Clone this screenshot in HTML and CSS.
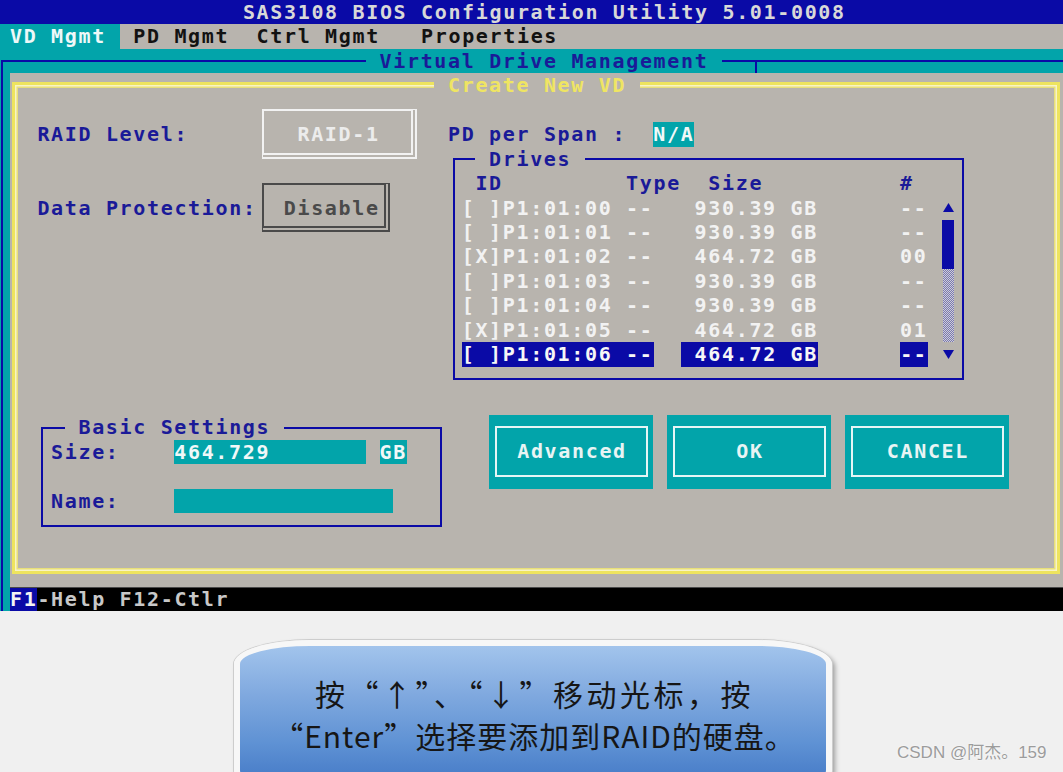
FILE: index.html
```html
<!DOCTYPE html>
<html lang="zh-CN">
<head>
<meta charset="utf-8">
<title>SAS3108 BIOS Configuration Utility</title>
<link rel="stylesheet" href="styles.css">
</head>
<body>
<div class="screen">
  <div class="bios">
    <div class="titlebar">SAS3108 BIOS Configuration Utility 5.01-0008</div>
    <div class="menubar"><span class="tab-active">VD Mgmt </span> PD Mgmt  Ctrl Mgmt   Properties</div>

    <div class="frame-bg"></div>
    <div class="frame-line"></div>
    <div class="frame-title">Virtual Drive Management</div>
    <div class="frame-tick"></div>

    <div class="panel"></div>
    <div class="panel-border"></div>
    <div class="panel-title">Create New VD</div>

    <div class="lbl lbl-raid">RAID Level:</div>
    <div class="box-raid"></div>
    <div class="val-raid">RAID-1</div>

    <div class="lbl lbl-dp">Data Protection:</div>
    <div class="box-dp"></div>
    <div class="val-dp">Disable</div>

    <div class="lbl lbl-span">PD per Span :</div>
    <div class="val-span">N/A</div>

    <div class="drives-box"></div>
    <div class="drives-title">Drives</div>
    <div class="drive-list"><div class="drive-head"> ID         Type  Size          #</div><div class="drive-row">[ ]P1:01:00 --   930.39 GB      --</div><div class="drive-row">[ ]P1:01:01 --   930.39 GB      --</div><div class="drive-row">[X]P1:01:02 --   464.72 GB      00</div><div class="drive-row">[ ]P1:01:03 --   930.39 GB      --</div><div class="drive-row">[ ]P1:01:04 --   930.39 GB      --</div><div class="drive-row">[X]P1:01:05 --   464.72 GB      01</div><div class="drive-row"><span class="sel">[ ]P1:01:06 --</span>  <span class="sel"> 464.72 GB</span>      <span class="sel">--</span></div></div>
    <div class="scrollbar"><div class="sb-arrow"><svg width="11" height="9" viewBox="0 0 11 9"><polygon points="5.5,0 11,9 0,9" fill="#0a0aa6"/></svg></div><div class="sb-thumb"></div><div class="sb-track"></div><div class="sb-arrow"><svg width="11" height="9" viewBox="0 0 11 9"><polygon points="0,0 11,0 5.5,9" fill="#0a0aa6"/></svg></div></div>

    <div class="basic-box"></div>
    <div class="basic-title">Basic Settings</div>
    <div class="lbl lbl-size">Size:</div>
    <div class="fld fld-size">464.729</div>
    <div class="fld fld-gb">GB</div>
    <div class="lbl lbl-name">Name:</div>
    <div class="fld fld-name"></div>

    <div class="btn btn-advanced"><div class="btn-inner">Advanced</div></div>
    <div class="btn btn-ok"><div class="btn-inner">OK</div></div>
    <div class="btn btn-cancel"><div class="btn-inner">CANCEL</div></div>

    <div class="statusbar"><span class="key">F1</span>-Help F12-Ctlr</div>
  </div>
</div>
<div class="below">
  <div class="callout">
    <p class="callout-line line-one">按“↑”、“↓”移动光标，按</p>
    <p class="callout-line line-two">“Enter”选择要添加到RAID的硬盘。</p>
  </div>
  <div class="watermark">CSDN @阿杰。159</div>
</div>
</body>
</html>
```

FILE: styles.css
```css
html, body {
  margin: 0;
  padding: 0;
}
body {
  width: 1063px;
  height: 772px;
  overflow: hidden;
  background: #f0f0f0;
  position: relative;
}

.screen {
  width: 1063px;
  height: 611px;
  overflow: hidden;
}

/* text-mode screen: first column is partly off-screen, so it is narrower */
.bios {
  display: grid;
  grid-template-columns: 10px repeat(79, 13.7px);
  grid-template-rows: repeat(25, 24.45px);
  font-family: "DejaVu Sans Mono", "Liberation Mono", monospace;
  font-weight: bold;
  font-size: 20px;
  line-height: 24.45px;
  letter-spacing: 1.66px;
  color: #1a1a98;
}
.bios > * {
  white-space: pre;
}

/* top rows */
.titlebar {
  grid-row: 1;
  grid-column: 1 / -1;
  background: #0a0aa6;
  color: #d8d8d8;
  padding-left: 242.9px;
}
.menubar {
  grid-row: 2;
  grid-column: 1 / -1;
  background: #b8b4ae;
  color: #121212;
}
.tab-active {
  display: inline-block;
  padding-left: 10px;
  background: #02a4aa;
  color: #eef8f8;
}

/* outer frame */
.frame-bg {
  grid-row: 3 / 26;
  grid-column: 1 / -1;
  background: #02a4aa;
}
.frame-line {
  grid-row: 3 / 26;
  grid-column: 1 / -1;
  margin: 11px 0 0 1px;
  border-top: 2px solid #0a0aa6;
  border-left: 2px solid #0a0aa6;
}
.frame-title {
  grid-row: 3;
  grid-column: 28 / span 26;
  padding-left: 13.7px;
  background: #02a4aa;
  color: #1a1a98;
}
.frame-tick {
  grid-row: 3;
  grid-column: 56;
  justify-self: start;
  width: 2px;
  margin: 12px 0 0 5.85px;
  background: #0a0aa6;
}

/* gray panel */
.panel {
  grid-row: 4 / 25;
  grid-column: 2 / -1;
  background: #b8b4ae;
}
.panel-border {
  grid-row: 4 / 25;
  grid-column: 2 / 79;
  margin: 8.5px 4px 13px 2px;
  border: 3px solid #eee45e;
  box-shadow: inset 0 0 0 1.5px #f8f4c6, inset 0 0 0 3px #e8df7a;
}
.panel-title {
  grid-row: 4;
  grid-column: 33 / span 15;
  padding-left: 13.7px;
  background: #b8b4ae;
  color: #efe562;
}

/* labels */
.lbl {
  color: #1a1a98;
}
.lbl-raid { grid-row: 6; grid-column: 4 / span 12; }
.lbl-dp { grid-row: 9; grid-column: 4 / span 16; }
.lbl-span { grid-row: 6; grid-column: 34 / span 13; }
.lbl-size { grid-row: 19; grid-column: 5 / span 5; }
.lbl-name { grid-row: 21; grid-column: 5 / span 5; }

/* RAID level box */
.box-raid {
  grid-row: 5 / 8;
  grid-column: 20 / 32;
  margin: 11.2px 3.8px 12px 5.4px;
  border-top: 2px solid #f2f2f2;
  border-left: 2px solid #f2f2f2;
  border-right: 6px double #f2f2f2;
  border-bottom: 6px double #f2f2f2;
}
.val-raid {
  grid-row: 6;
  grid-column: 23 / span 6;
  color: #ececec;
}

/* data protection box */
.box-dp {
  grid-row: 8 / 11;
  grid-column: 20 / 30;
  margin: 11.85px 3.6px 12.5px 5.4px;
  border-top: 2px solid #4a4a4a;
  border-left: 2px solid #4a4a4a;
  border-right: 6px double #4a4a4a;
  border-bottom: 6px double #4a4a4a;
}
.val-dp {
  grid-row: 9;
  grid-column: 22 / span 7;
  color: #4a4a4a;
}

.val-span {
  grid-row: 6;
  grid-column: 49 / span 3;
  background: #02a4aa;
  color: #f0f8f8;
}

/* drives */
.drives-box {
  grid-row: 7 / 17;
  grid-column: 34 / 72;
  margin: 11.5px 4px 11.5px 5px;
  border: 2px solid #0a0aa6;
}
.drives-title {
  grid-row: 7;
  grid-column: 36 / span 8;
  padding-left: 13.7px;
  background: #b8b4ae;
  color: #1a1a98;
}
.drive-list {
  grid-row: 8 / 16;
  grid-column: 35 / 69;
  display: flex;
  flex-direction: column;
}
.drive-head {
  height: 24.45px;
  color: #1a1a98;
}
.drive-row {
  height: 24.45px;
  color: #f2f2f2;
}
.sel {
  display: inline-block;
  background: #0a0aa6;
  color: #f6f6f6;
}

.scrollbar {
  grid-row: 9 / 16;
  grid-column: 70;
  display: flex;
  flex-direction: column;
}
.sb-arrow {
  height: 24.45px;
  display: flex;
  align-items: center;
  justify-content: center;
  padding-left: 2px;
}
.sb-thumb {
  height: 48.9px;
  margin-left: 1.5px;
  background: #0a0aa6;
}
.sb-track {
  height: 73.35px;
  margin: 0 0.5px 0 2.5px;
  background: repeating-conic-gradient(#7878b2 0 25%, #d0ced6 0 50%) 0 0 / 2px 2px;
}

/* basic settings */
.basic-box {
  grid-row: 18 / 23;
  grid-column: 4 / 34;
  margin: 12px 6px 11px 4px;
  border: 2px solid #0a0aa6;
}
.basic-title {
  grid-row: 18;
  grid-column: 6 / span 16;
  padding-left: 13.7px;
  background: #b8b4ae;
  color: #1a1a98;
}
.fld {
  background: #02a4aa;
  color: #f0f8f8;
}
.fld-size { grid-row: 19; grid-column: 14 / span 14; }
.fld-gb { grid-row: 19; grid-column: 29 / span 2; }
.fld-name { grid-row: 21; grid-column: 14 / span 16; }

/* buttons */
.btn {
  grid-row: 18 / 21;
  display: flex;
  padding: 11px 5.6px 12px;
  background: #02a4aa;
}
.btn-advanced { grid-column: 37 / span 12; }
.btn-ok { grid-column: 50 / span 12; }
.btn-cancel { grid-column: 63 / span 12; }
.btn-inner {
  flex: 1;
  display: flex;
  align-items: center;
  justify-content: center;
  padding-left: 1.66px;
  border: 2px solid #e6f6f6;
  color: #e8f4f4;
}

/* status bar */
.statusbar {
  grid-row: 25;
  grid-column: 2 / -1;
  background: #000000;
  color: #c8c8c8;
  border-top: 1px solid #4a4a4a;
  line-height: 23.45px;
}
.key {
  display: inline-block;
  background: #0a0aa6;
  color: #f4f4f4;
}

/* below the screen */
.below {
  height: 161px;
}
.callout {
  box-sizing: border-box;
  width: 598px;
  height: 150px;
  margin: 29px 0 0 234px;
  padding-top: 26px;
  border: 6px solid #f7f7f7;
  border-radius: 76px 76px 30px 30px / 24px 24px 20px 20px;
  box-shadow: 0 0 0 1px #cdcdcd, 3px 3px 5px rgba(0, 0, 0, 0.35);
  background: linear-gradient(180deg, #a2c4ec 0%, #80a9df 35%, #5f92d4 70%, #4479c6 100%);
  text-align: center;
  font-family: "Noto Sans CJK SC", sans-serif;
  font-size: 30px;
  line-height: 42px;
  color: #161616;
}
.callout-line {
  margin: 0;
}
.line-one {
  letter-spacing: 3.5px;
  padding-left: 3px;
}
.line-two {
  letter-spacing: 1px;
  padding-left: 3px;
}
.watermark {
  position: absolute;
  left: 897px;
  top: 741px;
  font-family: "Liberation Sans", "Noto Sans CJK SC", sans-serif;
  font-size: 17px;
  line-height: 24px;
  color: #9c9c9c;
  text-shadow: 0 0 2px #ffffff;
}
```
